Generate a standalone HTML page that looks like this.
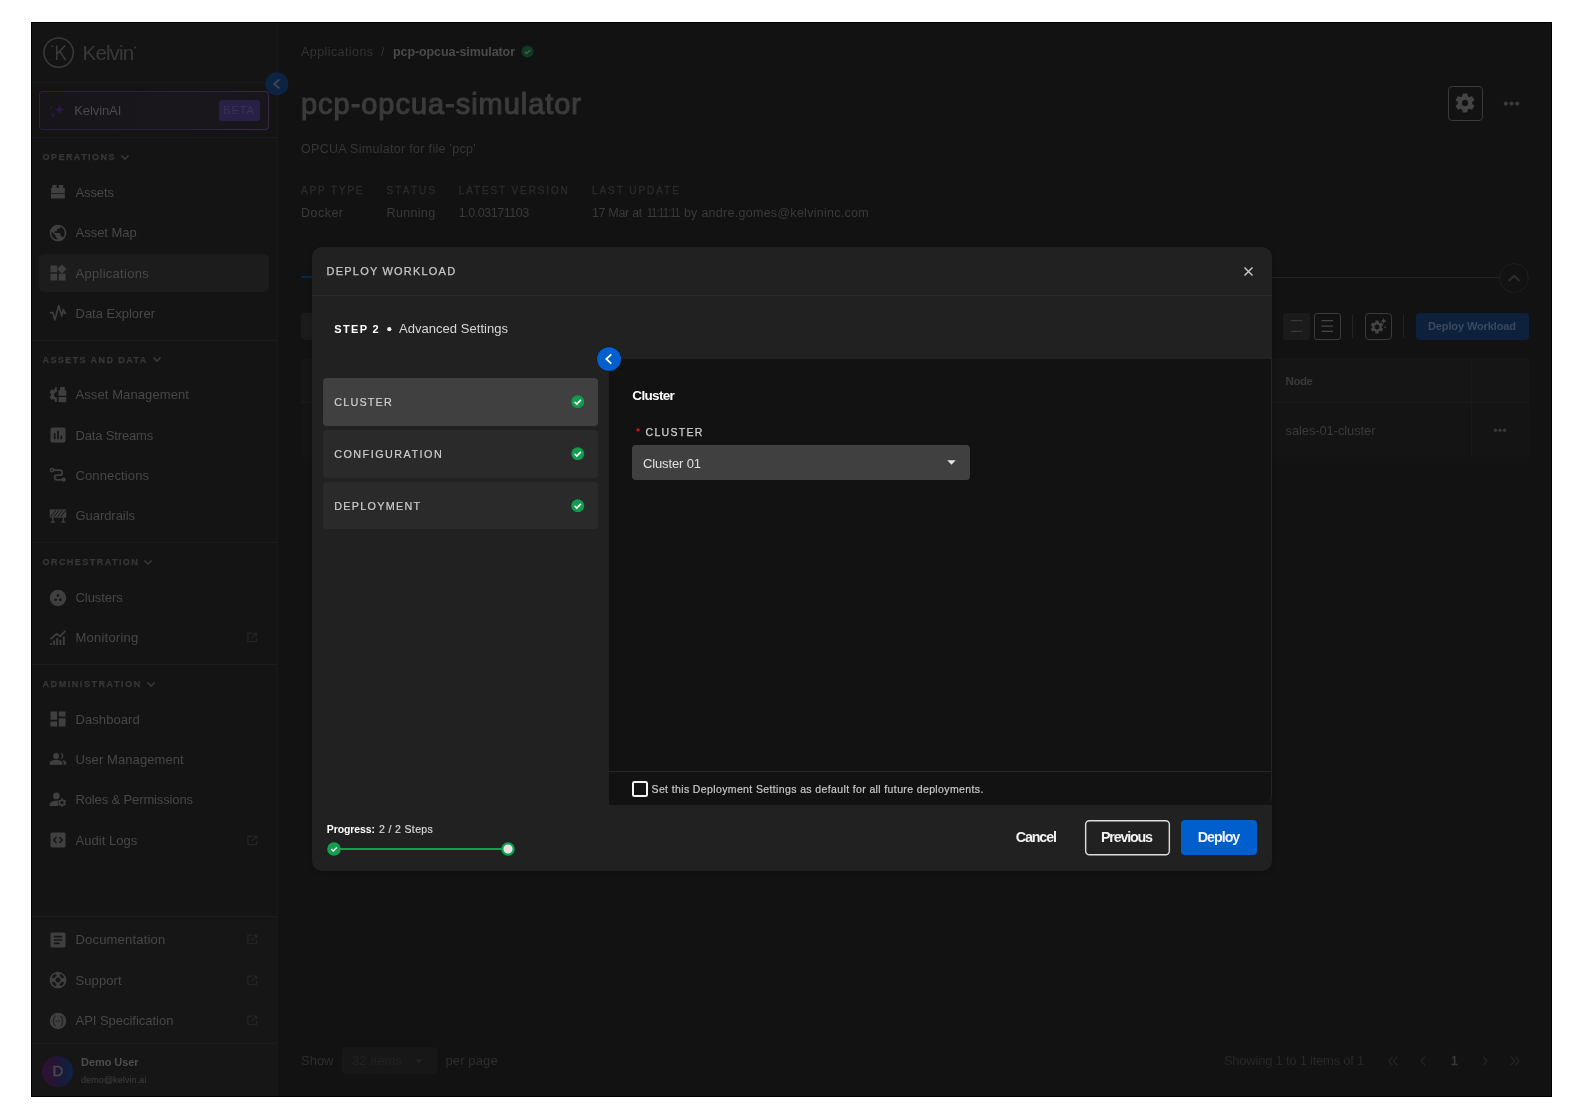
<!DOCTYPE html>
<html><head><meta charset="utf-8"><title>Deploy Workload</title>
<style>
html,body{margin:0;padding:0;background:#fff;}
body{width:1584px;height:1120px;position:relative;overflow:hidden;font-family:"Liberation Sans", sans-serif;}
.b{position:absolute;box-sizing:border-box;display:block;}
.tl{position:absolute;left:0;top:0;width:1584px;height:1120px;will-change:transform;}
.t{position:absolute;white-space:pre;font-family:"Liberation Sans", sans-serif;}
</style></head><body>
<div class="b" style="left:31px;top:22px;width:1521px;height:1075px;background:#121212;border:1px solid #000;"></div>
<div class="b" style="left:32px;top:23px;width:245px;height:1073px;background:#141414;"></div>
<div class="b" style="left:277px;top:23px;width:1px;height:1073px;background:#191919;"></div>
<div class="b" style="left:32px;top:82.3px;width:245px;height:1px;background:#1b1b1b;"></div>
<div class="b" style="left:32px;top:137px;width:245px;height:1px;background:#1b1b1b;"></div>
<div class="b" style="left:32px;top:340px;width:245px;height:1px;background:#1b1b1b;"></div>
<div class="b" style="left:32px;top:542px;width:245px;height:1px;background:#1b1b1b;"></div>
<div class="b" style="left:32px;top:664px;width:245px;height:1px;background:#1b1b1b;"></div>
<div class="b" style="left:32px;top:916px;width:245px;height:180px;background:#161616;"></div>
<div class="b" style="left:32px;top:916px;width:245px;height:1px;background:#1c1c1c;"></div>
<div class="b" style="left:32px;top:1043px;width:245px;height:1px;background:#1c1c1c;"></div>
<svg class="b" style="left:43px;top:37px;" width="32" height="32" viewBox="0 0 32 32"><circle cx="15.600" cy="15.600" r="14.700" fill="none" stroke="#3a3a3a" stroke-width="1.500"/><path d="M13.700 8.400V23M22.200 8.400l-8.500 8.800M16.700 14.300l5.900 8.700" fill="none" stroke="#3c3c3c" stroke-width="1.500"/><circle cx="9.400" cy="9.200" r="0.850" fill="#3c3c3c"/></svg>
<svg class="b" style="left:133px;top:45px;" width="5" height="5" viewBox="0 0 5 5"><circle cx="2.200" cy="2.400" r="1" fill="#3a3a3a"/></svg>
<div class="b" style="left:39px;top:91px;width:230px;height:38.5px;background:linear-gradient(90deg,#2d1c45,#2f1e45 50%,#3b2541);border-radius:4px;"></div>
<div class="b" style="left:40px;top:92px;width:228px;height:36.5px;background:linear-gradient(90deg,#17151a,#19171b 60%,#18161a);border-radius:3px;"></div>
<svg class="b" style="left:49.3px;top:103.7px;" width="16" height="14" viewBox="0 0 16 14"><path d="M10.500 0.800 l1.300 3.500 3.500 1.300 -3.500 1.300 -1.300 3.500 -1.300 -3.500 -3.500 -1.300 3.500 -1.300z M4.200 8.400l.8 2 2 .8-2 .8-.8 2-.8-2-2-.8 2-.8z" fill="#2c194d"/><circle cx="2.300" cy="3.600" r="1.050" fill="#2c194d"/></svg>
<div class="b" style="left:219.2px;top:99.7px;width:40.4px;height:21.2px;background:#292047;border-radius:3px;"></div>
<svg class="b" style="left:265px;top:71.5px;" width="24" height="24" viewBox="0 0 24 24"><circle cx="11.800" cy="11.900" r="11.550" fill="#0c2342"/><path d="M14.400 7.600L9.200 11.900l5.200 4.300" fill="none" stroke="#3f4854" stroke-width="1.900"/></svg>
<svg class="b" style="left:120.0px;top:153.8px;" width="10" height="7" viewBox="0 0 10 7"><path d="M1.400 1.500l3.600 3.600 3.600-3.600" fill="none" stroke="#373737" stroke-width="1.700"/></svg>
<svg class="b" style="left:48px;top:182px;" width="20" height="20" viewBox="0 0 24 24"><path d="M3.600 7.300h16.600v6.100H3.600zM3.600 14.500h16.600v5.300H3.600zM5.200 3.700h5.300v3.700H5.200zM12.900 3.700h5.300v3.700h-5.300z" fill="#3f3f3f"/></svg>
<svg class="b" style="left:48px;top:222.5px;" width="20" height="20" viewBox="0 0 24 24"><path d="M12 2C6.480 2 2 6.480 2 12s4.480 10 10 10 10-4.480 10-10S17.520 2 12 2zm-1 17.930c-3.950-.490-7-3.850-7-7.930 0-.620.080-1.210.210-1.790L9 15v1c0 1.100.900 2 2 2v1.930zm6.900-2.540c-.260-.810-1-1.390-1.900-1.390h-1v-3c0-.550-.450-1-1-1H8v-2h2c.550 0 1-.450 1-1V7h2c1.100 0 2-.900 2-2v-.410c2.930 1.190 5 4.060 5 7.410 0 2.080-.800 3.970-2.100 5.390z" fill="#3f3f3f"/></svg>
<div class="b" style="left:39px;top:253.5px;width:230px;height:38.5px;background:#1c1c1c;border-radius:5px;"></div>
<svg class="b" style="left:48px;top:263px;" width="20" height="20" viewBox="0 0 24 24"><path d="M13 13v8h8v-8h-8zM3 21h8v-8H3v8zM3 3v8h8V3H3zm13.660-1.310L11 7.340 16.660 13l5.660-5.660-5.660-5.650z" fill="#3f3f3f"/></svg>
<svg class="b" style="left:48px;top:303px;" width="20" height="20" viewBox="0 0 24 24"><path d="M2.200 11.600h3.600l2.400 8.600 4.700-17 3.600 12.200 1.900-7.400 1.800 4.300h1.800" fill="none" stroke="#3f3f3f" stroke-width="2" stroke-linejoin="round"/></svg>
<svg class="b" style="left:151.7px;top:356.40000000000003px;" width="10" height="7" viewBox="0 0 10 7"><path d="M1.400 1.500l3.600 3.600 3.600-3.600" fill="none" stroke="#373737" stroke-width="1.700"/></svg>
<svg class="b" style="left:48px;top:384.7px;" width="20" height="20" viewBox="0 0 24 24"><path d="M12.600 6.400h9.300v6.500h-9.300zM12.600 14.500h9.300v6.100h-9.300zM14.500 2.400h5.600v4.100h-5.600z" fill="#3f3f3f"/><clipPath id="hg"><rect x="0" y="0" width="10.600" height="24"/></clipPath><g clip-path="url(#hg)"><path transform="translate(10.500 11.600) scale(.92) translate(-12 -12)" d="M19.14 12.94c.04-.3.06-.61.06-.94 0-.32-.02-.64-.07-.94l2.030-1.580c.18-.14.23-.41.12-.61l-1.920-3.320c-.12-.22-.37-.29-.59-.22l-2.390.96c-.5-.38-1.030-.7-1.620-.94l-.36-2.540c-.04-.24-.24-.41-.48-.41h-3.840c-.24 0-.43.17-.47.41l-.36 2.540c-.59.24-1.130.57-1.620.94l-2.390-.96c-.22-.08-.47 0-.59.22L2.740 8.870c-.12.21-.08.47.12.61l2.030 1.580c-.05.3-.09.63-.09.94s.02.64.07.94l-2.030 1.580c-.18.14-.23.41-.12.61l1.920 3.320c.12.22.37.29.59.22l2.390-.96c.5.38 1.030.7 1.620.94l.36 2.540c.05.24.24.41.48.41h3.840c.24 0 .44-.17.47-.41l.36-2.540c.59-.24 1.130-.56 1.620-.94l2.390.96c.22.08.47 0 .59-.22l1.920-3.320c.12-.22.07-.47-.12-.61l-2.010-1.580zM12 15.600c-1.980 0-3.600-1.620-3.600-3.600s1.620-3.600 3.600-3.600 3.600 1.620 3.600 3.600-1.620 3.600-3.600 3.600z" fill="#3f3f3f"/></g></svg>
<svg class="b" style="left:48px;top:425px;" width="20" height="20" viewBox="0 0 24 24"><path d="M19 3H5c-1.100 0-2 .900-2 2v14c0 1.100.900 2 2 2h14c1.100 0 2-.900 2-2V5c0-1.100-.900-2-2-2zM9 17H7v-7h2v7zm4 0h-2V7h2v10zm4 0h-2v-4h2v4z" fill="#3f3f3f"/></svg>
<svg class="b" style="left:48px;top:465.3px;" width="20" height="20" viewBox="0 0 24 24"><circle cx="4.900" cy="6.100" r="2" fill="none" stroke="#3f3f3f" stroke-width="1.800"/><circle cx="18.800" cy="17.500" r="2.600" fill="#3f3f3f"/><path d="M6.800 6.100H14a3.050 3.050 0 0 1 0 6.100h-3.200a2.750 2.750 0 0 0 0 5.500h5.700" fill="none" stroke="#3f3f3f" stroke-width="2.100"/></svg>
<svg class="b" style="left:48px;top:505.6px;" width="20" height="20" viewBox="0 0 24 24"><path d="M2.100 4.100h19.800V14H2.100z" fill="#3f3f3f"/><path d="M4.900 14h1.700v5.700H4.900zM17.600 14h1.700v5.700h-1.700zM3.300 18.600h4.800v1.500H3.300zM16.100 18.600h4.800v1.500h-4.800z" fill="#3f3f3f"/><path d="M3.400 13l6-8M7.400 13l6-8M11.400 13l6-8M15.400 13l6-8" stroke="#141414" stroke-width="1.200"/></svg>
<svg class="b" style="left:143.3px;top:558.6999999999999px;" width="10" height="7" viewBox="0 0 10 7"><path d="M1.400 1.500l3.600 3.600 3.600-3.600" fill="none" stroke="#373737" stroke-width="1.700"/></svg>
<svg class="b" style="left:48px;top:587.5px;" width="20" height="20" viewBox="0 0 24 24"><circle cx="12" cy="12" r="9.900" fill="#3f3f3f"/><circle cx="11.900" cy="9" r="1.500" fill="#141414"/><circle cx="9.200" cy="14" r="1.500" fill="#141414"/><circle cx="14.800" cy="14" r="1.500" fill="#141414"/></svg>
<svg class="b" style="left:48px;top:627.8px;" width="20" height="20" viewBox="0 0 24 24"><path d="M2.500 17.900h2.200v2.400H2.500zM6.200 15h2.200v5.300H6.200zM9.900 12.100h2.200v8.200H9.900zM13.800 14.200H16v6.100h-2.200zM17.900 10.100h2.200v10.200h-2.200z" fill="#3f3f3f"/><path d="M2.900 13.300l7.600-6.400 4 3.200 6.400-6.700" fill="none" stroke="#3f3f3f" stroke-width="2"/></svg>
<svg class="b" style="left:246.5px;top:632.3px;" width="11" height="11" viewBox="0 0 11 11"><path d="M9.600 6v3.600H0.900V1.200H5M6.700 1.200h2.900v2.900M9.600 1.200L4.600 6.200" fill="none" stroke="#232323" stroke-width="1.400"/></svg>
<svg class="b" style="left:145.7px;top:680.5px;" width="10" height="7" viewBox="0 0 10 7"><path d="M1.400 1.500l3.600 3.600 3.600-3.600" fill="none" stroke="#373737" stroke-width="1.700"/></svg>
<svg class="b" style="left:48px;top:709px;" width="20" height="20" viewBox="0 0 24 24"><path d="M3 13h8V3H3v10zm0 8h8v-6H3v6zm10 0h8V11h-8v10zm0-18v6h8V3h-8z" fill="#3f3f3f"/></svg>
<svg class="b" style="left:48px;top:749px;" width="20" height="20" viewBox="0 0 24 24"><circle cx="9.700" cy="8.400" r="3.600" fill="#3f3f3f"/><path d="M2.100 18.900v-2.200c0-2.500 5.100-3.700 7.600-3.700s7.600 1.200 7.600 3.700v2.200z" fill="#3f3f3f"/><path d="M15 4.900a3.500 3.500 0 1 1 0 7 5 5 0 0 0 0-7zM18.700 18.900v-2.500c0-1.300-.7-2.300-1.700-3.100 2.300.3 4.900 1.400 4.900 3.200v2.400z" fill="#3f3f3f"/></svg>
<svg class="b" style="left:48px;top:789.7px;" width="20" height="20" viewBox="0 0 24 24"><circle cx="10" cy="7.100" r="4" fill="#3f3f3f"/><path d="M2.100 19.100v-2.300c0-2.600 5.200-4 7.900-4 .8 0 1.700.1 2.700.3a6 6 0 0 0-.5 6z" fill="#3f3f3f"/><path transform="translate(16.900 15.200) scale(.52) translate(-12 -12)" d="M19.14 12.94c.04-.3.06-.61.06-.94 0-.32-.02-.64-.07-.94l2.030-1.580c.18-.14.23-.41.12-.61l-1.920-3.320c-.12-.22-.37-.29-.59-.22l-2.390.96c-.5-.38-1.030-.7-1.620-.94l-.36-2.540c-.04-.24-.24-.41-.48-.41h-3.840c-.24 0-.43.17-.47.41l-.36 2.540c-.59.24-1.130.57-1.620.94l-2.390-.96c-.22-.08-.47 0-.59.22L2.740 8.870c-.12.21-.08.47.12.61l2.030 1.580c-.05.3-.09.63-.09.94s.02.64.07.94l-2.030 1.580c-.18.14-.23.41-.12.61l1.920 3.320c.12.22.37.29.59.22l2.390-.96c.5.38 1.030.7 1.620.94l.36 2.540c.05.24.24.41.48.41h3.840c.24 0 .44-.17.47-.41l.36-2.540c.59-.24 1.130-.56 1.620-.94l2.390.96c.22.08.47 0 .59-.22l1.920-3.320c.12-.22.07-.47-.12-.61l-2.010-1.580zM12 15.600c-1.980 0-3.600-1.620-3.600-3.600s1.620-3.600 3.600-3.600 3.600 1.620 3.600 3.600-1.620 3.600-3.600 3.600z" fill="#3f3f3f"/></svg>
<svg class="b" style="left:48px;top:830px;" width="20" height="20" viewBox="0 0 24 24"><path d="M19 3H5c-1.100 0-2 .900-2 2v14c0 1.100.900 2 2 2h14c1.100 0 2-.900 2-2V5c0-1.100-.900-2-2-2z" fill="#3f3f3f"/><path d="M10.200 8.800L7 12l3.200 3.200M13.800 8.800L17 12l-3.200 3.200" fill="none" stroke="#141414" stroke-width="1.800"/></svg>
<svg class="b" style="left:246.5px;top:834.5px;" width="11" height="11" viewBox="0 0 11 11"><path d="M9.600 6v3.600H0.900V1.200H5M6.700 1.200h2.900v2.900M9.600 1.200L4.600 6.200" fill="none" stroke="#232323" stroke-width="1.400"/></svg>
<svg class="b" style="left:48px;top:929.6px;" width="20" height="20" viewBox="0 0 24 24"><path d="M19 3H5c-1.100 0-2 .900-2 2v14c0 1.100.900 2 2 2h14c1.100 0 2-.900 2-2V5c0-1.100-.900-2-2-2zm-5 14H7v-2h7v2zm3-4H7v-2h10v2zm0-4H7V7h10v2z" fill="#3f3f3f"/></svg>
<svg class="b" style="left:246.5px;top:934.1px;" width="11" height="11" viewBox="0 0 11 11"><path d="M9.600 6v3.600H0.900V1.200H5M6.700 1.200h2.900v2.900M9.600 1.200L4.600 6.200" fill="none" stroke="#232323" stroke-width="1.400"/></svg>
<svg class="b" style="left:48px;top:970.4px;" width="20" height="20" viewBox="0 0 24 24"><path d="M12 2C6.480 2 2 6.480 2 12s4.480 10 10 10 10-4.480 10-10S17.520 2 12 2zm7.460 7.120l-2.780 1.150c-.510-1.360-1.580-2.440-2.950-2.940l1.150-2.780c2.100.800 3.770 2.470 4.580 4.570zM12 15c-1.660 0-3-1.340-3-3s1.340-3 3-3 3 1.340 3 3-1.340 3-3 3zM9.130 4.540l1.170 2.780c-1.380.500-2.470 1.590-2.980 2.970L4.540 9.130c.810-2.110 2.480-3.780 4.590-4.590zM4.540 14.870l2.780-1.150c.510 1.380 1.590 2.460 2.970 2.960l-1.170 2.780c-2.100-.810-3.770-2.480-4.580-4.590zm10.340 4.590l-1.150-2.780c1.370-.510 2.450-1.590 2.950-2.970l2.780 1.170c-.810 2.100-2.480 3.770-4.580 4.580z" fill="#3f3f3f"/></svg>
<svg class="b" style="left:246.5px;top:974.9px;" width="11" height="11" viewBox="0 0 11 11"><path d="M9.600 6v3.600H0.900V1.200H5M6.700 1.200h2.900v2.900M9.600 1.200L4.600 6.200" fill="none" stroke="#232323" stroke-width="1.400"/></svg>
<svg class="b" style="left:48px;top:1010.5px;" width="20" height="20" viewBox="0 0 24 24"><circle cx="12" cy="12" r="9.900" fill="#3f3f3f"/><path d="M9 6.400c-2.200 0-1.900 1.900-1.900 3.400 0 1.400-1.200 2.200-1.200 2.200s1.200.8 1.200 2.200c0 1.500-.3 3.400 1.900 3.400M15 6.400c2.200 0 1.900 1.900 1.900 3.400 0 1.400 1.200 2.200 1.200 2.200s-1.200.8-1.200 2.200c0 1.500.3 3.400-1.900 3.400" fill="none" stroke="#161616" stroke-width="1.200"/><path d="M9.300 11.400h1.200v1.200H9.300zM11.400 11.400h1.200v1.200h-1.200zM13.500 11.400h1.200v1.200h-1.200z" fill="#161616"/></svg>
<svg class="b" style="left:246.5px;top:1015.0px;" width="11" height="11" viewBox="0 0 11 11"><path d="M9.600 6v3.600H0.900V1.200H5M6.700 1.200h2.900v2.900M9.600 1.200L4.600 6.200" fill="none" stroke="#232323" stroke-width="1.400"/></svg>
<div class="b" style="left:42.3px;top:1055.6px;width:31px;height:31px;background:linear-gradient(90deg,#321133 0%,#241533 38%,#181b39 68%,#0f2343 100%);border-radius:16px;"></div>
<svg class="b" style="left:521px;top:45.4px;" width="13" height="13" viewBox="0 0 13 13"><circle cx="6.500" cy="6.500" r="6" fill="#103a22"/><path d="M3.800 6.700l1.900 1.900 3.600-3.700" fill="none" stroke="#46604f" stroke-width="1.400"/></svg>
<div class="b" style="left:1448px;top:86px;width:35px;height:35px;border-radius:4px;border:1px solid #3a3a3a;"></div>
<svg class="b" style="left:1453.1px;top:91.05px;" width="24" height="24" viewBox="0 0 24 24"><path d="M19.140 12.940c.040-.300.060-.610.060-.940 0-.320-.020-.640-.070-.940l2.030-1.580c.180-.140.230-.410.120-.610l-1.920-3.320c-.120-.220-.370-.290-.590-.220l-2.390.960c-.500-.380-1.030-.700-1.620-.940l-.360-2.540c-.040-.240-.240-.410-.480-.410h-3.840c-.240 0-.430.170-.470.410l-.360 2.540c-.590.240-1.130.570-1.620.940l-2.390-.960c-.220-.080-.470 0-.590.220L2.740 8.870c-.120.210-.080.470.120.610l2.030 1.580c-.050.300-.090.630-.090.940s.020.640.070.940l-2.030 1.580c-.180.140-.230.410-.120.610l1.920 3.320c.120.220.370.290.590.220l2.390-.960c.500.380 1.030.700 1.620.940l.360 2.540c.050.240.240.410.480.410h3.840c.240 0 .440-.170.470-.410l.360-2.540c.590-.240 1.130-.560 1.620-.940l2.390.960c.220.080.470 0 .590-.220l1.920-3.320c.120-.220.070-.470-.120-.610l-2.010-1.580zM12 15.600c-1.980 0-3.600-1.620-3.600-3.600s1.620-3.600 3.600-3.600 3.600 1.620 3.600 3.600-1.620 3.600-3.600 3.600z" fill="#444444"/><circle cx="12" cy="12" r="3.700" fill="none" stroke="#444444" stroke-width="0.800"/></svg>
<svg class="b" style="left:1500px;top:98px;" width="24" height="12" viewBox="0 0 24 12"><circle cx="5.800" cy="5.600" r="2.100" fill="#3b3b3b"/><circle cx="11.500" cy="5.600" r="2.100" fill="#3b3b3b"/><circle cx="17.200" cy="5.600" r="2.100" fill="#3b3b3b"/></svg>
<div class="b" style="left:301px;top:277px;width:1198px;height:1px;background:#222222;"></div>
<div class="b" style="left:301px;top:276px;width:40px;height:2px;background:#0b2547;"></div>
<svg class="b" style="left:1498.5px;top:262.5px;" width="30" height="30" viewBox="0 0 30 30"><circle cx="15" cy="15" r="14.400" fill="#121212" stroke="#1f1f1f" stroke-width="1"/><path d="M9.700 18.100l5.400-5.400 5.400 5.400" fill="none" stroke="#2d2d2d" stroke-width="2.100"/></svg>
<div class="b" style="left:301px;top:313px;width:400px;height:27px;background:#1b1b1b;border-radius:4px;"></div>
<div class="b" style="left:1283px;top:313px;width:27px;height:27px;background:#1b1b1b;border-radius:3px;"></div>
<svg class="b" style="left:1283px;top:313px;" width="27" height="27" viewBox="0 0 27 27"><path d="M7.900 7.600h11.400M7.900 18.400h11.400" stroke="#363636" stroke-width="1.300"/></svg>
<div class="b" style="left:1314px;top:313px;width:27px;height:27px;border-radius:3px;border:1px solid #3a3a3a;"></div>
<svg class="b" style="left:1314px;top:313px;" width="27" height="27" viewBox="0 0 27 27"><path d="M7.400 7.600h11.600M7.400 13.100h11.600M7.400 18.400h11.600" stroke="#474747" stroke-width="1.300"/></svg>
<div class="b" style="left:1352px;top:314.5px;width:1px;height:23px;background:#232323;"></div>
<div class="b" style="left:1364.5px;top:313px;width:27.5px;height:27px;border-radius:4px;border:1px solid #3a3a3a;"></div>
<svg class="b" style="left:1368.6px;top:319.4px;" width="16" height="16" viewBox="0 0 24 24"><path d="M19.140 12.940c.040-.300.060-.610.060-.940 0-.320-.020-.640-.070-.940l2.030-1.580c.180-.140.230-.410.120-.610l-1.920-3.320c-.120-.220-.370-.290-.590-.220l-2.390.960c-.500-.380-1.030-.700-1.620-.940l-.360-2.540c-.040-.240-.240-.410-.480-.410h-3.840c-.240 0-.430.170-.470.410l-.360 2.540c-.590.240-1.130.570-1.620.940l-2.390-.960c-.220-.080-.470 0-.590.220L2.740 8.870c-.120.210-.080.470.120.610l2.030 1.580c-.050.300-.090.630-.090.940s.020.640.070.940l-2.030 1.580c-.180.140-.230.410-.120.610l1.920 3.320c.120.220.370.290.590.220l2.390-.960c.500.380 1.030.700 1.620.940l.360 2.540c.050.240.240.410.480.410h3.840c.240 0 .440-.170.470-.410l.360-2.540c.590-.240 1.130-.560 1.620-.940l2.390.960c.220.080.470 0 .590-.220l1.920-3.320c.120-.220.070-.470-.120-.610l-2.010-1.580zM12 15.600c-1.980 0-3.600-1.620-3.600-3.600s1.620-3.600 3.600-3.600 3.600 1.620 3.600 3.600-1.620 3.600-3.600 3.600z" fill="#444"/></svg>
<svg class="b" style="left:1379px;top:317px;" width="10" height="13" viewBox="0 0 10 13"><path d="M4.600 0.900l.9 2.200 2.200.9-2.200.9-.9 2.200-.9-2.200-2.200-.9 2.200-.9z" fill="#444"/><path d="M6.200 8.600l.5 1.200 1.200.5-1.200.5-.5 1.200-.5-1.200-1.200-.5 1.200-.5z" fill="#3c3c3c"/></svg>
<div class="b" style="left:1403px;top:314.5px;width:1px;height:23px;background:#232323;"></div>
<div class="b" style="left:1415.5px;top:313px;width:113.5px;height:27px;background:#0d203c;border-radius:4px;"></div>
<div class="b" style="left:301px;top:359px;width:1228px;height:43px;background:#151515;"></div>
<div class="b" style="left:301px;top:402px;width:1228px;height:1px;background:#1b1b1b;"></div>
<div class="b" style="left:301px;top:403px;width:1228px;height:53.5px;background:#141414;"></div>
<div class="b" style="left:1471px;top:359px;width:1px;height:97px;background:#1a1a1a;"></div>
<svg class="b" style="left:1490px;top:424px;" width="20" height="12" viewBox="0 0 20 12"><circle cx="5.400" cy="6.200" r="1.700" fill="#393939"/><circle cx="10" cy="6.200" r="1.700" fill="#393939"/><circle cx="14.600" cy="6.200" r="1.700" fill="#393939"/></svg>
<div class="b" style="left:341.5px;top:1047px;width:95.5px;height:26.5px;background:#171717;border-radius:3px;"></div>
<svg class="b" style="left:415px;top:1059px;" width="8" height="5" viewBox="0 0 8 5"><path d="M0.500 0.500h7L4 4.300z" fill="#242424"/></svg>
<svg class="b" style="left:1385px;top:1054.7px;" width="16" height="12" viewBox="0 0 16 12"><path d="M7.60 1.800L3.80 6l3.800 4.200" fill="none" stroke="#242424" stroke-width="1.300"/><path d="M12.20 1.800L8.40 6l3.800 4.200" fill="none" stroke="#242424" stroke-width="1.300"/></svg>
<svg class="b" style="left:1415.3px;top:1054.7px;" width="16" height="12" viewBox="0 0 16 12"><path d="M9.90 1.800L6.10 6l3.800 4.200" fill="none" stroke="#242424" stroke-width="1.300"/></svg>
<svg class="b" style="left:1476.7px;top:1054.7px;" width="16" height="12" viewBox="0 0 16 12"><path d="M6.10 1.800L9.90 6l-3.800 4.200" fill="none" stroke="#242424" stroke-width="1.300"/></svg>
<svg class="b" style="left:1507.2px;top:1054.7px;" width="16" height="12" viewBox="0 0 16 12"><path d="M3.80 1.800L7.60 6l-3.800 4.200" fill="none" stroke="#242424" stroke-width="1.300"/><path d="M8.40 1.800L12.20 6l-3.800 4.200" fill="none" stroke="#242424" stroke-width="1.300"/></svg>
<div class="b" style="left:311.5px;top:247.3px;width:960.2px;height:623.8px;background:#212121;border-radius:10px;box-shadow:0 1px 5px rgba(0,0,0,.14);"></div>
<svg class="b" style="left:1243px;top:266.3px;" width="11" height="11" viewBox="0 0 11 11"><path d="M1.500 1.500l8 8M9.500 1.500l-8 8" fill="none" stroke="#c6c6c6" stroke-width="1.450"/></svg>
<div class="b" style="left:311.5px;top:294.5px;width:960.2px;height:1px;background:#2b2b2b;"></div>
<svg class="b" style="left:385px;top:325px;" width="9" height="9" viewBox="0 0 9 9"><circle cx="4.300" cy="4.200" r="2.100" fill="#f2f2f2"/></svg>
<div class="b" style="left:1262px;top:795px;width:9.7px;height:10.2px;background:#121212;"></div>
<div class="b" style="left:608.8px;top:358.5px;width:662.9px;height:446.7px;background:#121212;border-bottom-right-radius:9px;border-right:1px solid #242424;"></div>
<div class="b" style="left:608.8px;top:771px;width:662px;height:1px;background:#262626;"></div>
<div class="b" style="left:323px;top:378.2px;width:274.7px;height:47.5px;background:#404040;border-radius:4px;"></div>
<svg class="b" style="left:571.1px;top:395.0px;" width="13.5" height="13.5" viewBox="0 0 13.5 13.5"><circle cx="6.750" cy="6.750" r="6.500" fill="#119c4d"/><path d="M3.600 6.900l2.200 2.200 4.100-4.200" fill="none" stroke="#fff" stroke-width="1.700"/></svg>
<div class="b" style="left:323px;top:430.1px;width:274.7px;height:47.5px;background:#2a2a2a;border-radius:4px;"></div>
<svg class="b" style="left:571.1px;top:446.90000000000003px;" width="13.5" height="13.5" viewBox="0 0 13.5 13.5"><circle cx="6.750" cy="6.750" r="6.500" fill="#119c4d"/><path d="M3.600 6.900l2.200 2.200 4.100-4.200" fill="none" stroke="#fff" stroke-width="1.700"/></svg>
<div class="b" style="left:323px;top:481.8px;width:274.7px;height:47.5px;background:#2a2a2a;border-radius:4px;"></div>
<svg class="b" style="left:571.1px;top:498.6px;" width="13.5" height="13.5" viewBox="0 0 13.5 13.5"><circle cx="6.750" cy="6.750" r="6.500" fill="#119c4d"/><path d="M3.600 6.900l2.200 2.200 4.100-4.200" fill="none" stroke="#fff" stroke-width="1.700"/></svg>
<svg class="b" style="left:596px;top:345.9px;" width="26" height="26" viewBox="0 0 26 26"><circle cx="13" cy="13" r="12.600" fill="#17130c"/><circle cx="13" cy="13" r="12" fill="#005fcc"/><path d="M15.300 8.400L10.300 13l5 4.600" fill="none" stroke="#fff" stroke-width="1.800"/></svg>
<svg class="b" style="left:634px;top:426px;" width="8" height="8" viewBox="0 0 8 8"><circle cx="4" cy="3.900" r="1.700" fill="#c41d14"/></svg>
<div class="b" style="left:632px;top:445px;width:338.2px;height:34.6px;background:#404040;border-radius:4px;"></div>
<svg class="b" style="left:947.3px;top:460.3px;" width="9" height="5" viewBox="0 0 9 5"><path d="M0.300 0.300h8.400L4.500 4.700z" fill="#e6e6e6"/></svg>
<div class="b" style="left:632px;top:781px;width:15.7px;height:15.7px;border-radius:2.5px;border:2px solid #f4f4f4;"></div>
<div class="b" style="left:333px;top:847.8px;width:175px;height:2.3px;background:#11a050;"></div>
<svg class="b" style="left:326.5px;top:842px;" width="14" height="14" viewBox="0 0 14 14"><circle cx="7" cy="7" r="6.800" fill="#11a050"/><path d="M4.200 7.100l2 2 3.600-3.700" fill="none" stroke="#fff" stroke-width="1.400"/></svg>
<svg class="b" style="left:501.4px;top:842px;" width="14" height="14" viewBox="0 0 14 14"><circle cx="7" cy="7" r="5.700" fill="#e4e4e4" stroke="#11a050" stroke-width="2.200"/></svg>
<svg class="b" style="left:1084px;top:819px;" width="88" height="38" viewBox="0 0 88 38"><rect x="1.650" y="1.750" width="83.700" height="34" rx="3.800" fill="none" stroke="#dedede" stroke-width="1.400"/></svg>
<div class="b" style="left:1181px;top:820.1px;width:75.6px;height:35.3px;background:#005fcc;border-radius:4px;"></div>
<div class="tl">
<span class="t" style="left:82.6px;top:37.8px;font-size:20.5px;line-height:29px;color:#393939;letter-spacing:-0.869px;">Kelvin</span>
<span class="t" style="left:74.3px;top:102px;font-size:13px;line-height:18px;color:#4a4a4a;letter-spacing:-0.100px;">KelvinAI</span>
<span class="t" style="left:223.2px;top:102.8px;font-size:11px;line-height:15px;color:#3b3259;letter-spacing:0.926px;">BETA</span>
<span class="t" style="left:42.5px;top:150.9px;font-size:9px;line-height:13px;color:#373737;font-weight:700;letter-spacing:1.462px;-webkit-text-stroke:0.25px #373737;">OPERATIONS</span>
<span class="t" style="left:75.5px;top:183.6px;font-size:13px;line-height:18px;color:#474747;letter-spacing:-0.103px;">Assets</span>
<span class="t" style="left:75.5px;top:224.1px;font-size:13px;line-height:18px;color:#474747;letter-spacing:-0.015px;">Asset Map</span>
<span class="t" style="left:75.5px;top:264.6px;font-size:13px;line-height:18px;color:#474747;letter-spacing:0.281px;">Applications</span>
<span class="t" style="left:75.5px;top:304.6px;font-size:13px;line-height:18px;color:#474747;letter-spacing:0.001px;">Data Explorer</span>
<span class="t" style="left:42.5px;top:353.5px;font-size:9px;line-height:13px;color:#373737;font-weight:700;letter-spacing:1.418px;-webkit-text-stroke:0.25px #373737;">ASSETS AND DATA</span>
<span class="t" style="left:75.5px;top:386.3px;font-size:13px;line-height:18px;color:#474747;letter-spacing:0.092px;">Asset Management</span>
<span class="t" style="left:75.5px;top:426.6px;font-size:13px;line-height:18px;color:#474747;letter-spacing:-0.153px;">Data Streams</span>
<span class="t" style="left:75.5px;top:466.9px;font-size:13px;line-height:18px;color:#474747;letter-spacing:0.122px;">Connections</span>
<span class="t" style="left:75.5px;top:507.2px;font-size:13px;line-height:18px;color:#474747;letter-spacing:-0.052px;">Guardrails</span>
<span class="t" style="left:42.5px;top:555.8px;font-size:9px;line-height:13px;color:#373737;font-weight:700;letter-spacing:1.455px;-webkit-text-stroke:0.25px #373737;">ORCHESTRATION</span>
<span class="t" style="left:75.5px;top:589.1px;font-size:13px;line-height:18px;color:#474747;letter-spacing:-0.055px;">Clusters</span>
<span class="t" style="left:75.5px;top:629.4px;font-size:13px;line-height:18px;color:#474747;letter-spacing:0.222px;">Monitoring</span>
<span class="t" style="left:42.5px;top:677.6px;font-size:9px;line-height:13px;color:#373737;font-weight:700;letter-spacing:1.567px;-webkit-text-stroke:0.25px #373737;">ADMINISTRATION</span>
<span class="t" style="left:75.5px;top:710.6px;font-size:13px;line-height:18px;color:#474747;letter-spacing:0.074px;">Dashboard</span>
<span class="t" style="left:75.5px;top:750.6px;font-size:13px;line-height:18px;color:#474747;letter-spacing:0.089px;">User Management</span>
<span class="t" style="left:75.5px;top:791.3px;font-size:13px;line-height:18px;color:#474747;letter-spacing:-0.135px;">Roles &amp; Permissions</span>
<span class="t" style="left:75.5px;top:831.6px;font-size:13px;line-height:18px;color:#474747;letter-spacing:0.029px;">Audit Logs</span>
<span class="t" style="left:75.5px;top:931.2px;font-size:13px;line-height:18px;color:#474747;letter-spacing:0.187px;">Documentation</span>
<span class="t" style="left:75.5px;top:972px;font-size:13px;line-height:18px;color:#474747;letter-spacing:0.092px;">Support</span>
<span class="t" style="left:75.5px;top:1012.1px;font-size:13px;line-height:18px;color:#474747;letter-spacing:-0.024px;">API Specification</span>
<span class="t" style="left:52.4px;top:1060.3px;font-size:15px;line-height:21px;color:#47474f;-webkit-text-stroke:0.5px #47474f;">D</span>
<span class="t" style="left:81px;top:1055px;font-size:11px;line-height:15px;color:#4d4d4d;font-weight:700;letter-spacing:-0.060px;">Demo User</span>
<span class="t" style="left:81px;top:1073.7px;font-size:9px;line-height:13px;color:#393939;letter-spacing:0.094px;-webkit-text-stroke:0.2px #393939;">demo@kelvin.ai</span>
<span class="t" style="left:301px;top:43.1px;font-size:12.5px;line-height:18px;color:#333333;letter-spacing:0.418px;">Applications</span>
<span class="t" style="left:381px;top:43.1px;font-size:12.5px;line-height:18px;color:#333333;">/</span>
<span class="t" style="left:393px;top:43.1px;font-size:12.5px;line-height:18px;color:#4a4a4a;font-weight:700;letter-spacing:-0.090px;">pcp-opcua-simulator</span>
<span class="t" style="left:301px;top:83.5px;font-size:29px;line-height:41px;color:#3b3b3b;letter-spacing:0.959px;-webkit-text-stroke:1.1px #3b3b3b;">pcp-opcua-simulator</span>
<span class="t" style="left:301px;top:140px;font-size:12.5px;line-height:18px;color:#363636;letter-spacing:0.302px;">OPCUA Simulator for file 'pcp'</span>
<span class="t" style="left:301px;top:183.7px;font-size:10px;line-height:14px;color:#2c2c2c;letter-spacing:1.850px;-webkit-text-stroke:0.3px #2c2c2c;">APP TYPE</span>
<span class="t" style="left:386.6px;top:183.7px;font-size:10px;line-height:14px;color:#2c2c2c;letter-spacing:2.106px;-webkit-text-stroke:0.3px #2c2c2c;">STATUS</span>
<span class="t" style="left:458.8px;top:183.7px;font-size:10px;line-height:14px;color:#2c2c2c;letter-spacing:1.873px;-webkit-text-stroke:0.3px #2c2c2c;">LATEST VERSION</span>
<span class="t" style="left:591.9px;top:183.7px;font-size:10px;line-height:14px;color:#2c2c2c;letter-spacing:1.956px;-webkit-text-stroke:0.3px #2c2c2c;">LAST UPDATE</span>
<span class="t" style="left:301px;top:204.1px;font-size:12.5px;line-height:18px;color:#3a3a3a;letter-spacing:0.481px;">Docker</span>
<span class="t" style="left:386.6px;top:204.1px;font-size:12.5px;line-height:18px;color:#3a3a3a;letter-spacing:0.320px;">Running</span>
<span class="t" style="left:458.8px;top:204.1px;font-size:12.5px;line-height:18px;color:#3a3a3a;letter-spacing:-0.459px;">1.0.03171103</span>
<span class="t" style="left:591.9px;top:204.1px;font-size:12.5px;line-height:18px;color:#3a3a3a;letter-spacing:-0.302px;">17 Mar at</span>
<span class="t" style="left:646.8px;top:204.1px;font-size:12.5px;line-height:18px;color:#3a3a3a;letter-spacing:-0.900px;transform:scaleX(0.8437);transform-origin:0 50%;">11:11:11</span>
<span class="t" style="left:683.9px;top:204.1px;font-size:12.5px;line-height:18px;color:#3a3a3a;letter-spacing:0.276px;">by andre.gomes@kelvininc.com</span>
<span class="t" style="left:1428px;top:319px;font-size:11px;line-height:15px;color:#3b495f;font-weight:700;letter-spacing:-0.118px;">Deploy Workload</span>
<span class="t" style="left:1285.5px;top:373.3px;font-size:11.5px;line-height:16px;color:#393939;font-weight:700;letter-spacing:-0.417px;">Node</span>
<span class="t" style="left:1285.5px;top:422px;font-size:13px;line-height:18px;color:#3a3a3a;letter-spacing:-0.118px;">sales-01-cluster</span>
<span class="t" style="left:301px;top:1052px;font-size:13px;line-height:18px;color:#2e2e2e;letter-spacing:-0.010px;">Show</span>
<span class="t" style="left:352px;top:1052px;font-size:13px;line-height:18px;color:#232323;letter-spacing:0.123px;">32 items</span>
<span class="t" style="left:445.4px;top:1052px;font-size:13px;line-height:18px;color:#2e2e2e;letter-spacing:0.139px;">per page</span>
<span class="t" style="left:1223.9px;top:1051.7px;font-size:13px;line-height:18px;color:#282828;letter-spacing:-0.233px;">Showing 1 to 1 items of 1</span>
<span class="t" style="left:1450.8px;top:1051.9px;font-size:13px;line-height:18px;color:#3a3a3a;-webkit-text-stroke:0.4px #3a3a3a;">1</span>
<span class="t" style="left:326.6px;top:264.2px;font-size:11px;line-height:15px;color:#c8c8c8;letter-spacing:1.202px;-webkit-text-stroke:0.25px #c8c8c8;">DEPLOY WORKLOAD</span>
<span class="t" style="left:334.2px;top:321.5px;font-size:11px;line-height:15px;color:#ffffff;font-weight:700;letter-spacing:1.356px;">STEP 2</span>
<span class="t" style="left:399px;top:320px;font-size:13px;line-height:18px;color:#d8d8d8;letter-spacing:0.037px;">Advanced Settings</span>
<span class="t" style="left:334.2px;top:394.9px;font-size:10.8px;line-height:15px;color:#d0d0d0;letter-spacing:1.199px;-webkit-text-stroke:0.18px #d0d0d0;">CLUSTER</span>
<span class="t" style="left:334.2px;top:446.8px;font-size:10.8px;line-height:15px;color:#d0d0d0;letter-spacing:1.477px;-webkit-text-stroke:0.18px #d0d0d0;">CONFIGURATION</span>
<span class="t" style="left:334.2px;top:498.5px;font-size:10.8px;line-height:15px;color:#d0d0d0;letter-spacing:1.288px;-webkit-text-stroke:0.18px #d0d0d0;">DEPLOYMENT</span>
<span class="t" style="left:632.3px;top:386.1px;font-size:13.5px;line-height:19px;color:#ffffff;font-weight:700;letter-spacing:-0.669px;">Cluster</span>
<span class="t" style="left:645.5px;top:424.7px;font-size:10.5px;line-height:15px;color:#cfcfcf;letter-spacing:1.297px;-webkit-text-stroke:0.25px #cfcfcf;">CLUSTER</span>
<span class="t" style="left:643px;top:454.8px;font-size:13px;line-height:18px;color:#e0e0e0;letter-spacing:-0.139px;">Cluster 01</span>
<span class="t" style="left:651.5px;top:781.5px;font-size:10.5px;line-height:15px;color:#c8c8c8;letter-spacing:0.376px;-webkit-text-stroke:0.2px #c8c8c8;">Set this Deployment Settings as default for all future deployments.</span>
<span class="t" style="left:326.8px;top:822.2px;font-size:10.5px;line-height:15px;color:#ffffff;font-weight:700;letter-spacing:-0.091px;">Progress:</span>
<span class="t" style="left:379px;top:822.2px;font-size:10.5px;line-height:15px;color:#d8d8d8;letter-spacing:0.360px;-webkit-text-stroke:0.2px #d8d8d8;">2 / 2 Steps</span>
<span class="t" style="left:1015.7px;top:827.2px;font-size:14.3px;line-height:20px;color:#f2f2f2;font-weight:700;letter-spacing:-1.118px;">Cancel</span>
<span class="t" style="left:1101px;top:827.2px;font-size:14.3px;line-height:20px;color:#f2f2f2;font-weight:700;letter-spacing:-1.201px;">Previous</span>
<span class="t" style="left:1197.8px;top:827.2px;font-size:14.3px;line-height:20px;color:#f2f2f6;font-weight:700;letter-spacing:-1.034px;">Deploy</span>
</div>
</body></html>
